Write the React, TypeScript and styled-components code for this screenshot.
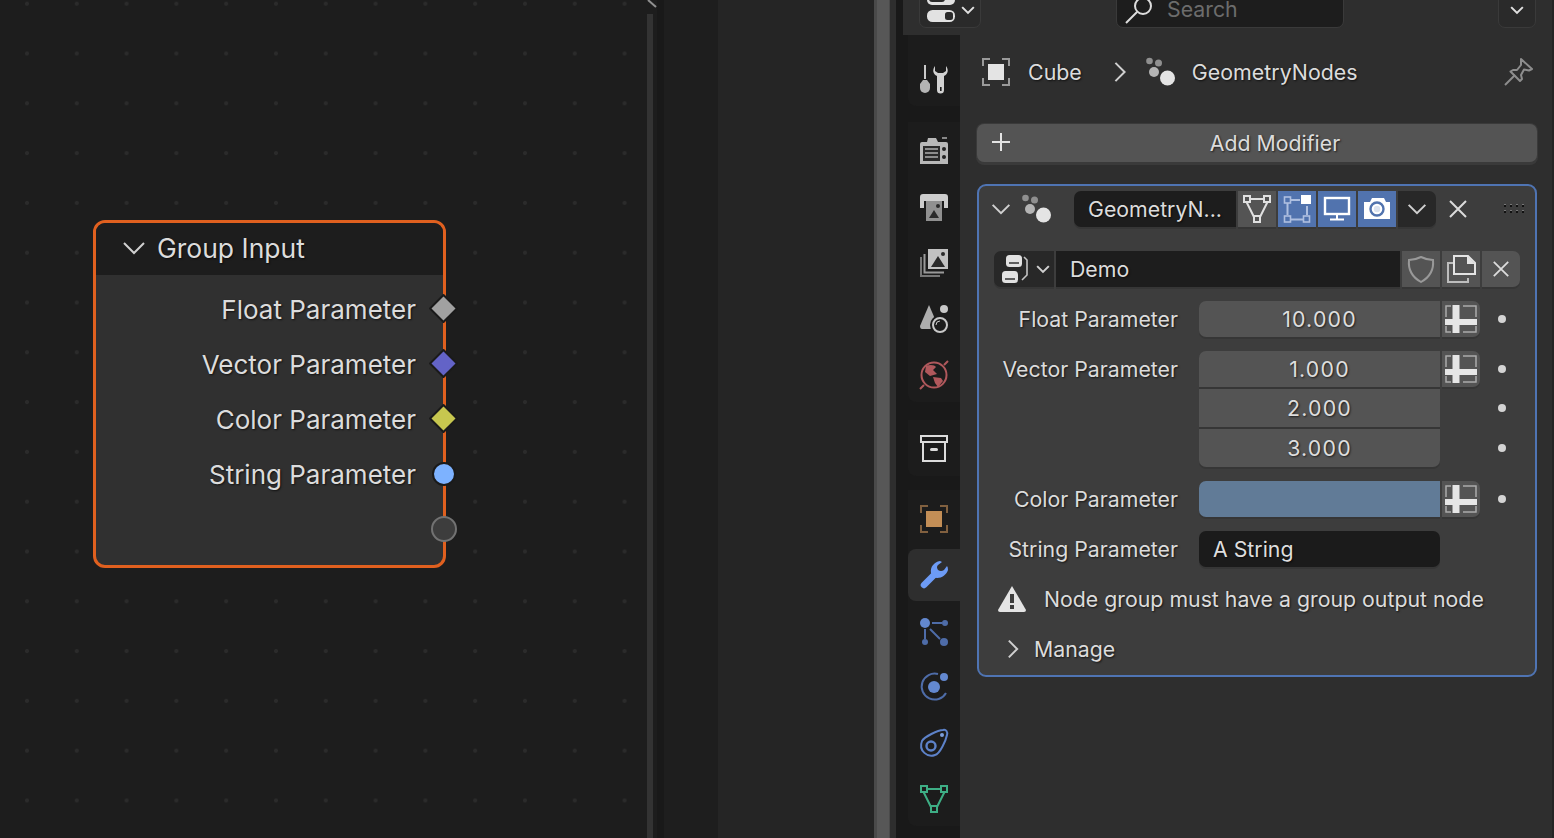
import React from "react";
import styled, { createGlobalStyle } from "styled-components";

const Global = createGlobalStyle`
  html, body { margin: 0; padding: 0; background: #1d1d1d; overflow: hidden; }
  * { box-sizing: border-box; }
`;

const Page = styled.div`
  width: 1554px; height: 838px; display: flex; overflow: hidden;
  font-family: Inter, "Liberation Sans", sans-serif; color: #dcdcdc;
  text-shadow: 1px 1px 2px rgba(0,0,0,.65);
`;
const Canvas = styled.div`
  width: 647px; height: 100%; position: relative; background-color: #1d1d1d;
  background-image: radial-gradient(circle at center, #2b2b2b 0, #2b2b2b 1.6px, transparent 2.4px);
  background-size: 49.8px 49.8px; background-position: 2.1px -21.2px;
`;
const ScrollStrip = styled.div`
  width: 10px; height: 100%; background: #1d1d1d; position: relative;
`;
const ScrollThumb = styled.div`
  width: 6px; height: 824px; margin-top: 14px; background: #333;
`;
const ScrollArrow = styled.svg`
  position: absolute; left: 0; top: 0; width: 12px; height: 8px;
`;
const Strip = styled.div<{ $w: number; $bg: string }>`
  width: ${p => p.$w}px; height: 100%; background: ${p => p.$bg}; flex: none;
`;
const Handle = styled.div`
  width: 16px; height: 100%; background: #575757; border-left: 3px solid #4a4a4a; border-right: 1px solid #4a4a4a; flex: none;
`;

const Node = styled.div`
  position: absolute; left: 93px; top: 220px; width: 353px; height: 348px;
  border: 3px solid #e0601f; border-radius: 12px; background: #303030;
`;
const NodeHead = styled.div`
  height: 52px; background: #1d1d1d; border-radius: 9px 9px 0 0; display: flex; align-items: center;
  padding-left: 26px; gap: 11px; font-size: 26.5px; padding-bottom: 2px;
`;
const NodeBody = styled.div`
  padding-top: 7px; display: flex; flex-direction: column;
`;
const NodeRow = styled.div`
  height: 55px; display: flex; align-items: center; justify-content: flex-end; padding-right: 27px;
  font-size: 26px; position: relative;
`;
const Diamond = styled.span<{ $c: string }>`
  position: absolute; right: -11px; top: 50%; width: 21px; height: 21px; margin-top: -11.5px;
  background: ${p => p.$c}; border: 2px solid #1a1a1a; transform: rotate(45deg); border-radius: 1px;
`;
const Round = styled.span<{ $c: string; $b: string; $s: number }>`
  position: absolute; right: ${p => -11 + 10.5 - p.$s / 2}px; top: 50%; width: ${p => p.$s}px; height: ${p => p.$s}px;
  margin-top: ${p => -1 - p.$s / 2}px;
  background: ${p => p.$c}; border: 2px solid ${p => p.$b}; border-radius: 50%;
`;

const Props = styled.div`
  flex: 1; height: 100%; display: flex; flex-direction: column; background: #2e2e2e; min-width: 0;
  border-right: 2px solid #242424;
`;
const TopBar = styled.div`
  height: 35px; flex: none; display: flex; align-items: flex-end; padding: 0 16px 7px 16px; overflow: hidden;
`;
const TopButton = styled.div`
  width: 62px; height: 42px; flex: none; background: #2a2a2a; border: 1px solid #3a3a3a; border-radius: 7px;
  display: flex; align-items: flex-end; justify-content: center; gap: 5px; padding-bottom: 3px;
`;
const TopChevron = styled.span`
  display: flex; margin-bottom: 7px;
`;
const TopSearch = styled.div`
  width: 228px; height: 42px; margin-left: 135px; background: #1d1d1d; border: 1px solid #3a3a3a; border-radius: 7px;
  display: flex; align-items: flex-end; padding: 0 0 3px 8px; gap: 14px; font-size: 21.3px; color: #6c6c6c; line-height: 26px;
  text-shadow: none;
`;
const SearchText = styled.span`
  margin-bottom: 2px;
`;
const TopDrop = styled(TopButton)`
  width: 38px; margin-left: auto;
`;
const Lower = styled.div`
  flex: 1; display: flex; min-height: 0;
`;
const TabColumn = styled.div`
  width: 57px; flex: none; background: #191919; padding-left: 5px; display: flex; flex-direction: column;
`;
const TabGroup = styled.div<{ $gap?: number; $top?: number }>`
  background: #1c1c1c; border-bottom-left-radius: 8px; padding-top: ${p => p.$top ?? 0}px;
  margin-top: ${p => p.$gap ?? 0}px; flex: none;
`;
const Tab = styled.div<{ $active?: boolean }>`
  height: ${p => (p.$active ? 52 : 56)}px; margin: ${p => (p.$active ? "3px 0 1px" : "0")};
  display: flex; align-items: center; justify-content: center; padding-top: ${p => (p.$active ? 0 : 2)}px;
  background: ${p => (p.$active ? "#2e2e2e" : "transparent")};
  border-radius: 8px 0 0 8px;
`;
const Main = styled.div`
  flex: 1; padding: 0 15px 0 17px; min-width: 0;
`;
const Crumbs = styled.div`
  margin-top: 20px; height: 34px; display: flex; align-items: center; font-size: 21.4px; padding-left: 5px;
`;
const CrumbIcon = styled.span<{ $m: number }>`
  margin-left: ${p => p.$m}px; display: flex; flex: none;
`;
const CrumbLabel = styled.span<{ $m: number }>`
  margin-left: ${p => p.$m}px;
`;
const Pin = styled.span`
  margin-left: auto; margin-right: 3px; display: flex;
`;
const AddButton = styled.div`
  margin-top: 35px; height: 38px; background: #545454; border-radius: 7px; position: relative;
  display: flex; align-items: center; justify-content: center; font-size: 21.3px; padding-left: 36px;
  box-shadow: 0 0 0 1px #3a3a3a, 0 2px 0 1px #3a3a3a;
`;
const PlusAt = styled.span`
  position: absolute; left: 12px; top: 6px; display: flex;
`;
const Panel = styled.div`
  margin-top: 22px; height: 493px; background: #3d3d3d; border: 2px solid #4f74b3; border-radius: 9px;
  font-size: 21.3px; padding: 5px 15px 0;
`;
const PanelHead = styled.div`
  height: 36px; display: flex; align-items: center; margin: 0 -15px;
`;
const HeadIcon = styled.span<{ $m: number }>`
  margin-left: ${p => p.$m}px; display: flex; flex: none;
`;
const NameField = styled.div`
  width: 162px; height: 36px; margin-left: 22px; margin-right: 2px; background: #1d1d1d; border-radius: 7px 0 0 7px;
  display: flex; align-items: center; padding-left: 14px; box-shadow: 0 2px 0 #363636; flex: none;
`;
const SquareBtn = styled.div<{ $bg?: string; $right?: boolean }>`
  width: 38px; height: 36px; flex: none; margin-right: 2px; background: ${p => p.$bg ?? "#545454"};
  display: flex; align-items: center; justify-content: center; box-shadow: 0 2px 0 #363636;
  border-radius: ${p => (p.$right ? "0 7px 7px 0" : "0")};
`;
const Row = styled.div<{ $top: number }>`
  margin-top: ${p => p.$top}px; display: flex; align-items: flex-start;
`;
const Selector = styled.div`
  width: 60px; height: 36px; margin-right: 2px; background: #282828; border-radius: 7px 0 0 7px;
  display: flex; align-items: center; padding-left: 8px; gap: 6px; box-shadow: 0 2px 0 #363636; flex: none;
`;
const DemoField = styled.div`
  width: 344px; height: 36px; margin-right: 2px; background: #1d1d1d; display: flex; align-items: center;
  padding-left: 14px; box-shadow: 0 2px 0 #363636; flex: none;
`;
const Label = styled.div`
  width: 184px; height: 36px; line-height: 36px; text-align: right; flex: none; margin-right: 21px;
`;
const Stack = styled.div`
  display: flex; flex-direction: column; gap: 2px; width: 241px; flex: none; margin-right: 2px;
`;
const Field = styled.div<{ $h?: number; $pos?: "only" | "top" | "mid" | "bottom" }>`
  height: ${p => p.$h ?? 36}px; width: 241px; background: #545454; display: flex; align-items: center; justify-content: center;
  box-shadow: 0 2px 0 #363636;
  border-radius: ${p => ({ only: "7px 0 0 7px", top: "7px 0 0 0", mid: "0", bottom: "0 0 7px 7px" }[p.$pos ?? "only"])};
  letter-spacing: 1.2px; color: #dedede;
`;
const ColorField = styled(Field)`
  background: #617b97; margin-right: 2px; flex: none;
`;
const TextField = styled(Field)`
  background: #1b1b1b; border-radius: 7px; justify-content: flex-start; padding-left: 14px; letter-spacing: 0;
`;
const Deco = styled.div`
  width: 38px; height: 36px; flex: none; background: #545454; border-radius: 0 7px 7px 0;
  display: flex; align-items: center; justify-content: center; box-shadow: 0 2px 0 #363636;
`;
const DotCol = styled.div`
  width: 40px; margin-left: 18px; display: flex; flex-direction: column; flex: none;
`;
const DotCell = styled.div<{ $h: number }>`
  height: ${p => p.$h}px; display: flex; align-items: center;
`;
const Dot = styled.span`
  width: 8px; height: 8px; border-radius: 50%; background: #d4d4d4; display: block;
`;
const Warning = styled.div`
  margin-top: 14px; height: 36px; display: flex; align-items: center; padding-left: 4px;
`;
const WarnText = styled.span`
  margin-left: 18px;
`;
const Manage = styled.div`
  margin-top: 14px; height: 36px; display: flex; align-items: center; padding-left: 9px; gap: 11px;
`;

const I = styled.svg`
  display: block; flex: none; overflow: visible; fill: none;
`;

const Chevron = ({ size = 24, dir = "down", color = "#d0d0d0", w = 2 }: { size?: number; dir?: "down" | "right"; color?: string; w?: number }) => (
  <I width={size} height={size} viewBox="0 0 24 24">
    <path d={dir === "down" ? "M2 7 L12 17 L22 7" : "M7 2 L17 12 L7 22"} stroke={color} strokeWidth={w * 24 / size} />
  </I>
);
const Cross = ({ size = 20 }: { size?: number }) => (
  <I width={size} height={size} viewBox="0 0 20 20">
    <path d="M2 2 L18 18 M18 2 L2 18" stroke="#dcdcdc" strokeWidth="2" />
  </I>
);
const Plus = () => (
  <I width="24" height="24" viewBox="0 0 24 24">
    <path d="M12 3 V21 M3 12 H21" stroke="#e4e4e4" strokeWidth="2" />
  </I>
);
const Dots = () => (
  <I width="30" height="30" viewBox="0 0 30 30">
    <circle cx="3.5" cy="4" r="3.3" fill="#8f8f8f" />
    <circle cx="12.5" cy="6" r="3.5" fill="#8f8f8f" />
    <circle cx="8" cy="15" r="5" fill="#b4b4b4" />
    <circle cx="21.5" cy="21" r="7.5" fill="#e4e4e4" />
  </I>
);
const ObjectBox = ({ c1, c2 }: { c1: string; c2: string }) => (
  <I width="28" height="28" viewBox="0 0 28 28">
    <path d="M1 8 V1 H8 M20 1 H27 V8 M1 20 V27 H8 M20 27 H27 V20" stroke={c2} strokeWidth="2" />
    <rect x="6" y="6" width="16" height="16" fill={c1} />
  </I>
);
const MeshTri = ({ c, sw = 2 }: { c: string; sw?: number }) => (
  <I width="28" height="28" viewBox="0 0 28 28">
    <path d="M7 4 H21 M3.5 7 L11 22 M24.5 7 L17 22" stroke={c} strokeWidth={sw} />
    <rect x="1" y="1" width="6" height="6" stroke={c} strokeWidth={sw} />
    <rect x="21" y="1" width="6" height="6" stroke={c} strokeWidth={sw} />
    <rect x="11" y="21" width="6" height="6" stroke={c} strokeWidth={sw} />
  </I>
);
const EditIcon = () => (
  <I width="28" height="28" viewBox="0 0 28 28">
    <path d="M8 5 H17 M4.5 8 V20 M24 11 V20 M8 24.5 H20" stroke="#aebfe0" strokeWidth="2" />
    <rect x="1.5" y="2" width="6" height="6" stroke="#aebfe0" strokeWidth="1.6" />
    <rect x="1.5" y="21" width="6" height="6" stroke="#aebfe0" strokeWidth="1.6" />
    <rect x="20.5" y="21" width="6" height="6" stroke="#aebfe0" strokeWidth="1.6" />
    <rect x="18" y="0" width="10" height="9" fill="#fff" />
  </I>
);
const MonitorIcon = () => (
  <I width="28" height="28" viewBox="0 0 28 28">
    <rect x="2" y="3" width="24" height="16" stroke="#fff" strokeWidth="2.4" />
    <path d="M14 19 V24 M7 24.5 H21" stroke="#fff" strokeWidth="2" />
  </I>
);
const CameraIcon = () => (
  <I width="28" height="28" viewBox="0 0 28 28">
    <path d="M1 7 H7 L9 3 H21 L23 7 H27 V24 H1 Z" fill="#fff" />
    <circle cx="14" cy="14" r="6.5" fill="none" stroke="#5173ae" strokeWidth="2.4" />
    <circle cx="14" cy="14" r="3.2" fill="#5173ae" opacity=".2" />
  </I>
);
const Grip = () => (
  <I width="22" height="10" viewBox="0 0 22 10">
    {[1, 7, 13, 19].map(x => [0, 6].map(y => (
      <g key={`${x}${y}`}>
        <rect x={x} y={y} width="2" height="1" fill="#777" />
        <rect x={x} y={y + 1} width="2" height="2" fill="#111" />
      </g>
    )))}
  </I>
);
const NodeTreeIcon = () => (
  <I width="28" height="28" viewBox="0 0 28 28">
    <rect x="4" y="0" width="16" height="12" rx="3.5" fill="#e2e2e2" />
    <rect x="0" y="16" width="16" height="12" rx="3.5" fill="#e2e2e2" />
    <path d="M7 8 H17 M3 24 H13" stroke="#333" strokeWidth="1.6" />
    <path d="M22 2 L25 5 V20 L20 25" stroke="#c4c4c4" strokeWidth="1.6" />
  </I>
);
const ShieldIcon = () => (
  <I width="28" height="28" viewBox="0 0 28 28">
    <path d="M14 2 C18 4 22 5 26 5 C27 15 23 22 14 27 C5 22 1 15 2 5 C6 5 10 4 14 2 Z" stroke="#999" strokeWidth="2" />
  </I>
);
const DupIcon = () => (
  <I width="28" height="28" viewBox="0 0 28 28">
    <path d="M6 8 H1 V27 H21 V23" stroke="#bdbdbd" strokeWidth="2" />
    <path d="M7 19 V1 H21 L28 8 V19 Z" stroke="#e4e4e4" strokeWidth="2" />
    <path d="M20 1 V9 H28 Z" fill="#e4e4e4" />
  </I>
);
const DecoIcon = () => (
  <I width="32" height="28" viewBox="0 0 32 28">
    <path d="M1 12 V1 H6 M18 1 H31 V12 M1 21 V27 H6 M18 27 H31 V21" stroke="#aaa" strokeWidth="1.5" />
    <rect x="7.5" y="0" width="7" height="28" fill="#e6e6e6" />
    <rect x="0" y="14" width="32" height="6" fill="#e6e6e6" />
  </I>
);
const PinIcon = () => (
  <I width="30" height="28" viewBox="0 0 30 28">
    <path d="M1 27 L11 17" stroke="#8d8d8d" strokeWidth="2" />
    <path d="M17 1 L28 11 L25 12.5 L20 11.5 L17 17 L18 21 L16 23 L6.5 13.5 L9 12 L13 12 L17 7 Z" stroke="#8d8d8d" strokeWidth="2" strokeLinejoin="round" />
  </I>
);
const WarnIcon = () => (
  <I width="28" height="28" viewBox="0 0 28 28">
    <path d="M14 1 L28 25 Q28 27 26 27 H2 Q0 27 0 25 Z" fill="#e4e4e4" />
    <rect x="12" y="9" width="4" height="9" fill="#3d3d3d" />
    <rect x="12" y="20" width="4" height="4" fill="#3d3d3d" />
  </I>
);
const SearchIcon = () => (
  <I width="28" height="28" viewBox="0 0 28 28">
    <circle cx="18" cy="10" r="8" stroke="#ddd" strokeWidth="2" />
    <path d="M1 27 L12 16" stroke="#ddd" strokeWidth="2" />
  </I>
);
const EditorTypeIcon = () => (
  <I width="30" height="28" viewBox="0 0 30 28">
    <rect x="1" y="-4" width="28" height="13" rx="5" fill="#e2e2e2" />
    <rect x="3" y="-2" width="16" height="8" rx="3" fill="#2a2a2a" />
    <rect x="1" y="14" width="28" height="12" rx="5.5" fill="#e2e2e2" />
    <rect x="19" y="16" width="8" height="8" rx="2.5" fill="#2a2a2a" />
  </I>
);

const ToolsIcon = () => (
  <I width="28" height="28" viewBox="0 0 28 28">
    <path d="M5 0 V14" stroke="#c8c8c8" strokeWidth="2" />
    <path d="M3 15 H7 L10 19 V23 A5 5 0 0 1 0 23 V19 Z" fill="#b4b4b4" />
    <path d="M15 1 C12 5 13 9 17 11 V25 A3 3 0 0 0 24 25 V11 C28 9 29 5 26 1 V6 L23 8 H18 L15 6 Z" fill="#d2d2d2" />
    <rect x="20" y="22" width="1.6" height="4" fill="#1c1c1c" />
  </I>
);
const RenderIcon = () => (
  <I width="28" height="28" viewBox="0 0 28 28">
    <path d="M0 7 Q0 5 2 5 H7 L8 1 H16 L18 5 H26 Q28 5 28 7 V27 H0 Z" fill="#b8b8b8" />
    <rect x="22" y="0" width="5" height="2" fill="#888" />
    <rect x="3" y="9" width="17" height="15" fill="#2a2a2a" />
    <path d="M5 12 H18 M5 16 H18 M5 20 H18" stroke="#8d8d8d" strokeWidth="2" />
    <circle cx="24" cy="12" r="2" fill="#222" />
    <circle cx="24" cy="20" r="2" fill="#222" />
  </I>
);
const OutputIcon = () => (
  <I width="28" height="28" viewBox="0 0 28 28">
    <path d="M0 4 Q0 1 3 1 H25 Q28 1 28 4 V15 H24 V8 H4 V15 H0 Z" fill="#cdcdcd" />
    <rect x="6" y="8" width="16" height="20" fill="#909090" />
    <path d="M9 25 L14 17 L19 25 Z" fill="#2a2a2a" />
    <circle cx="18" cy="13" r="2" fill="#2a2a2a" />
  </I>
);
const LayerIcon = () => (
  <I width="28" height="28" viewBox="0 0 28 28">
    <path d="M1 8 V27 H20" stroke="#777" strokeWidth="2" />
    <path d="M4.5 5 V23.5 H24" stroke="#999" strokeWidth="2" />
    <rect x="8" y="0" width="20" height="20" fill="#c2c2c2" />
    <path d="M11 18 L18 7 L25 18 Z" fill="#2a2a2a" />
    <circle cx="23" cy="5" r="2" fill="#2a2a2a" />
  </I>
);
const SceneIcon = () => (
  <I width="28" height="28" viewBox="0 0 28 28">
    <path d="M9 0 L15 14 V24 H2 Q0 24 0 21 Z" fill="#aeaeae" />
    <circle cx="24" cy="4" r="4" fill="#c8c8c8" />
    <circle cx="20" cy="20" r="10" fill="#1c1c1c" />
    <circle cx="20" cy="20" r="7" stroke="#c8c8c8" strokeWidth="2" />
    <path d="M16 20 A4 4 0 0 1 20 16" stroke="#c8c8c8" strokeWidth="1" />
  </I>
);
const WorldIcon = () => (
  <I width="28" height="28" viewBox="0 0 28 28">
    <circle cx="14" cy="14" r="12.5" stroke="#b0585c" strokeWidth="2" />
    <path d="M6 5 C10 3 15 4 16 6 L13 9 L17 13 L10 15 L5 11 Z M13 16 L21 17 L23 20 L18 26 L15 22 Z" fill="#b0585c" />
    <path d="M0 28 L4 24 M24 4 L28 0" stroke="#b0585c" strokeWidth="2" />
  </I>
);
const ArchiveIcon = () => (
  <I width="28" height="28" viewBox="0 0 28 28">
    <rect x="1" y="1" width="26" height="6" stroke="#dcdcdc" strokeWidth="2" />
    <path d="M3 7 V26 H25 V7" stroke="#dcdcdc" strokeWidth="2" />
    <rect x="10" y="13" width="8" height="3" rx="1.5" fill="#dcdcdc" />
  </I>
);
const WrenchIcon = () => (
  <I width="28" height="28" viewBox="0 0 28 28">
    <path d="M4 24 L13 15" stroke="#6d9bf5" strokeWidth="6.5" strokeLinecap="round" />
    <path d="M20 0 C14 1 10 6 11 12 L13 16 C19 19 26 15 28 9 Q28 6 27 5 L24 9 Q21 11 18 9 Q16 6 18 4 L22 1 Z" fill="#6d9bf5" />
  </I>
);
const ParticleIcon = () => (
  <I width="28" height="28" viewBox="0 0 28 28">
    <circle cx="5" cy="6" r="5" fill="#6388cf" />
    <circle cx="25" cy="6" r="3" fill="#4e6ca8" />
    <path d="M12 6 H22 M5 12 V22 M10 12 L20 22" stroke="#4e6ca8" strokeWidth="2" />
    <circle cx="5" cy="25" r="3" fill="#4e6ca8" />
    <circle cx="24" cy="25" r="4" fill="#4e6ca8" />
  </I>
);
const PhysicsIcon = () => (
  <I width="28" height="28" viewBox="0 0 28 28">
    <path d="M18 1 A13 13 0 1 0 26 20" stroke="#4e6ca8" strokeWidth="2" />
    <circle cx="14" cy="14" r="6" fill="#6388cf" />
    <circle cx="24" cy="4" r="4" fill="#6388cf" />
  </I>
);
const ConstraintIcon = () => (
  <I width="28" height="28" viewBox="0 0 28 28">
    <path d="M2 12 C4 8 18 1 23 1 C26 0 28 3 27 6 C26 11 20 25 15 26 C8 29 -2 22 2 12 Z" stroke="#5d82c9" strokeWidth="2" />
    <circle cx="11" cy="17" r="4.5" stroke="#5d82c9" strokeWidth="2.4" />
    <circle cx="22" cy="6" r="2" fill="#7d9fdc" />
  </I>
);

const sockets = [
  { t: "Float Parameter", c: "#a1a1a1" },
  { t: "Vector Parameter", c: "#6363c7" },
  { t: "Color Parameter", c: "#c7c74f" },
];

export default function App() {
  return (
    <Page>
      <Global />
      <Canvas>
        <Node>
          <NodeHead><Chevron size={24} /><span>Group Input</span></NodeHead>
          <NodeBody>
            {sockets.map(s => (
              <NodeRow key={s.t}>{s.t}<Diamond $c={s.c} /></NodeRow>
            ))}
            <NodeRow>String Parameter<Round $c="#7db2ff" $b="#1a1a1a" $s={24} /></NodeRow>
            <NodeRow><Round $c="#3d3d3d" $b="#727272" $s={26} /></NodeRow>
          </NodeBody>
        </Node>
      </Canvas>
      <ScrollStrip>
        <ScrollThumb />
        <ScrollArrow viewBox="0 0 12 8"><path d="M1 0 L9 7" stroke="#909090" strokeWidth="2" /></ScrollArrow>
      </ScrollStrip>
      <Strip $w={7} $bg="#191919" />
      <Strip $w={54} $bg="#1e1e1e" />
      <Strip $w={156} $bg="#252525" />
      <Handle />
      <Strip $w={6} $bg="#2e2e2e" />
      <Strip $w={7} $bg="#191919" />
      <Props>
        <TopBar>
          <TopButton><EditorTypeIcon /><TopChevron><Chevron size={14} w={2} color="#e0e0e0" /></TopChevron></TopButton>
          <TopSearch><SearchIcon /><SearchText>Search</SearchText></TopSearch>
          <TopDrop><TopChevron><Chevron size={14} w={2} color="#e0e0e0" /></TopChevron></TopDrop>
        </TopBar>
        <Lower>
          <TabColumn>
            <TabGroup $top={15}><Tab><ToolsIcon /></Tab></TabGroup>
            <TabGroup $gap={16}>
              <Tab><RenderIcon /></Tab>
              <Tab><OutputIcon /></Tab>
              <Tab><LayerIcon /></Tab>
              <Tab><SceneIcon /></Tab>
              <Tab><WorldIcon /></Tab>
            </TabGroup>
            <TabGroup $gap={18}><Tab><ArchiveIcon /></Tab></TabGroup>
            <TabGroup $gap={14}>
              <Tab><ObjectBox c1="#c38e56" c2="#81603f" /></Tab>
              <Tab $active><WrenchIcon /></Tab>
              <Tab><ParticleIcon /></Tab>
              <Tab><PhysicsIcon /></Tab>
              <Tab><ConstraintIcon /></Tab>
              <Tab><MeshTri c="#3eae85" /></Tab>
            </TabGroup>
          </TabColumn>
          <Main>
            <Crumbs>
              <ObjectBox c1="#e4e4e4" c2="#9a9a9a" />
              <CrumbLabel $m={18}>Cube</CrumbLabel>
              <CrumbIcon $m={27}><Chevron size={22} dir="right" w={2} /></CrumbIcon>
              <CrumbIcon $m={15}><Dots /></CrumbIcon>
              <CrumbLabel $m={16}>GeometryNodes</CrumbLabel>
              <Pin><PinIcon /></Pin>
            </Crumbs>
            <AddButton><PlusAt><Plus /></PlusAt>Add Modifier</AddButton>
            <Panel>
              <PanelHead>
                <HeadIcon $m={12}><Chevron size={20} /></HeadIcon>
                <HeadIcon $m={11}><Dots /></HeadIcon>
                <NameField>GeometryN...</NameField>
                <SquareBtn><MeshTri c="#e0e0e0" /></SquareBtn>
                <SquareBtn $bg="#5173ae"><EditIcon /></SquareBtn>
                <SquareBtn $bg="#5173ae"><MonitorIcon /></SquareBtn>
                <SquareBtn $bg="#5173ae"><CameraIcon /></SquareBtn>
                <SquareBtn $bg="#282828" $right><Chevron size={20} /></SquareBtn>
                <HeadIcon $m={10}><Cross size={20} /></HeadIcon>
                <HeadIcon $m={35}><Grip /></HeadIcon>
              </PanelHead>
              <Row $top={24}>
                <Selector><NodeTreeIcon /><Chevron size={14} /></Selector>
                <DemoField>Demo</DemoField>
                <SquareBtn><ShieldIcon /></SquareBtn>
                <SquareBtn><DupIcon /></SquareBtn>
                <SquareBtn $right><Cross size={18} /></SquareBtn>
              </Row>
              <Row $top={14}>
                <Label>Float Parameter</Label>
                <Stack><Field>10.000</Field></Stack>
                <Deco><DecoIcon /></Deco>
                <DotCol><DotCell $h={36}><Dot /></DotCell></DotCol>
              </Row>
              <Row $top={14}>
                <Label>Vector Parameter</Label>
                <Stack>
                  <Field $pos="top">1.000</Field>
                  <Field $pos="mid" $h={38}>2.000</Field>
                  <Field $pos="bottom" $h={38}>3.000</Field>
                </Stack>
                <Deco><DecoIcon /></Deco>
                <DotCol>
                  <DotCell $h={36}><Dot /></DotCell>
                  <DotCell $h={42}><Dot /></DotCell>
                  <DotCell $h={38}><Dot /></DotCell>
                </DotCol>
              </Row>
              <Row $top={14}>
                <Label>Color Parameter</Label>
                <ColorField />
                <Deco><DecoIcon /></Deco>
                <DotCol><DotCell $h={36}><Dot /></DotCell></DotCol>
              </Row>
              <Row $top={14}>
                <Label>String Parameter</Label>
                <TextField>A String</TextField>
              </Row>
              <Warning><WarnIcon /><WarnText>Node group must have a group output node</WarnText></Warning>
              <Manage><Chevron size={20} dir="right" /><span>Manage</span></Manage>
            </Panel>
          </Main>
        </Lower>
      </Props>
    </Page>
  );
}
